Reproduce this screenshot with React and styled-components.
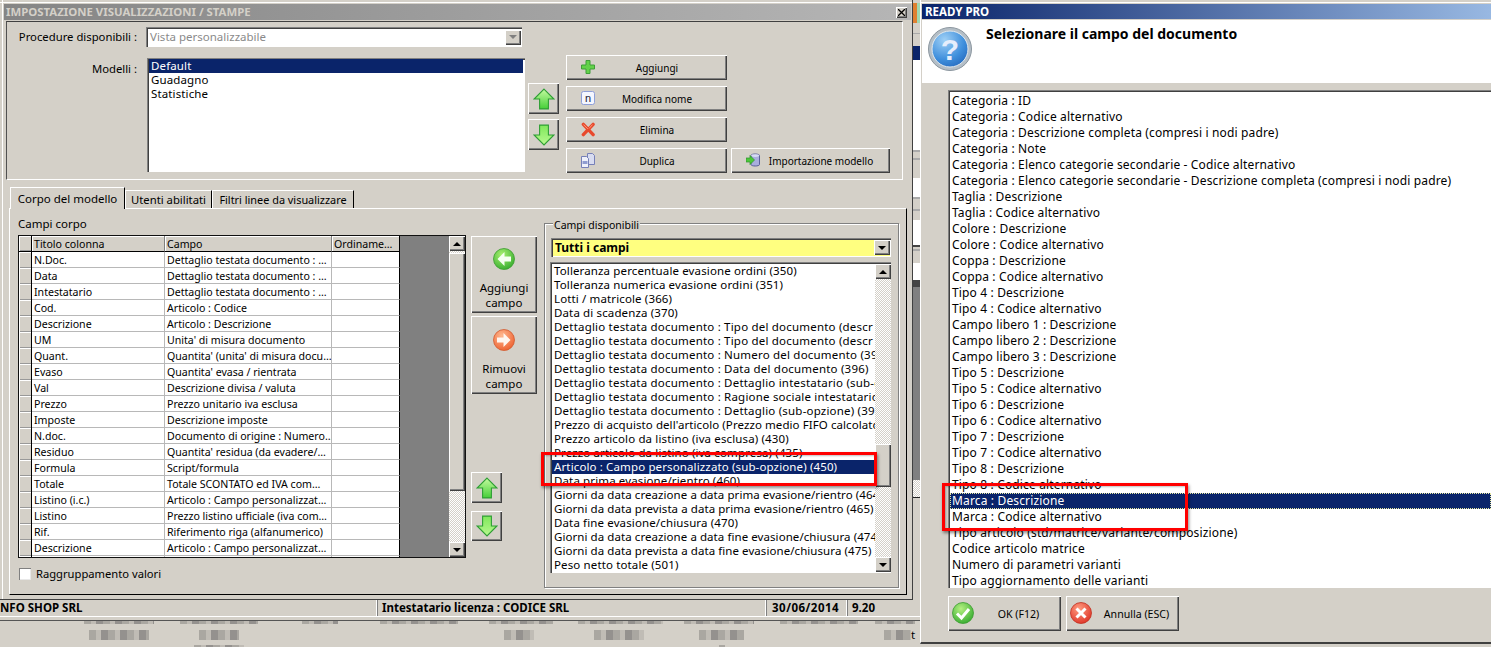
import React from 'react'
import styled, { createGlobalStyle } from 'styled-components'

const GlobalStyle = createGlobalStyle`
  html, body {
    margin: 0;
    padding: 0;
    background: #d4d0c8;
    overflow: hidden;
  }
  * {
    box-sizing: border-box;
  }
`

const FONT = '"Noto Sans", "DejaVu Sans", sans-serif'
const FACE = '#d4d0c8'
const NAVY = '#0a246a'

const raised = `
  background: ${FACE};
  box-shadow: inset 1px 1px #fff, inset -1px -1px #404040, inset -2px -2px #808080;
`
const sunken = `
  box-shadow: inset 1px 1px #808080, inset 2px 2px #404040, inset -1px -1px #fff;
`
const hatch = `
  background: repeating-conic-gradient(#fff 0 25%, ${FACE} 0 50%) 0 0 / 2px 2px;
`

const Screen = styled.div`
  position: relative;
  display: flex;
  width: 1491px;
  height: 647px;
  overflow: hidden;
  background: ${FACE};
  font: 11.5px/14px ${FONT};
  color: #000;
`

const LeftColumn = styled.div`
  display: flex;
  flex-direction: column;
  width: 920px;
  flex: none;
`

const TopRow = styled.div`
  display: flex;
  height: 600px;
`

const MainWindow = styled.div`
  display: flex;
  flex-direction: column;
  width: 913px;
  height: 600px;
  background: linear-gradient(#fff, #fff) 2px 0 / 1px 100% no-repeat, ${FACE};
  border-right: 1px solid #404040;
  border-bottom: 1px solid #404040;
`

const TopEdge = styled.div`
  height: 1px;
  margin: 2px 0 1px;
  background: #fff;
  flex: none;
`

const MainTitle = styled.div`
  display: flex;
  align-items: center;
  justify-content: space-between;
  height: 16px;
  margin: 0 1px 0 4px;
  padding: 0 4px 0 2px;
  background: linear-gradient(90deg, #858585, #b6b6b6);
  color: ${FACE};
  font-weight: 700;
  font-size: 11.4px;
  flex: none;
`

const CloseBox = styled.div`
  display: flex;
  align-items: center;
  justify-content: center;
  width: 11px;
  height: 11px;
  ${raised}
  color: #000;
`

const TopPanel = styled.div`
  display: flex;
  flex-direction: column;
  width: 897px;
  height: 159px;
  margin: 1px 0 0 6px;
  padding-top: 5px;
  border: 1px solid;
  border-color: #404040 #fff #fff #505050;
  flex: none;
`

const FormRow = styled.div`
  display: flex;
  align-items: flex-start;
`

const ModelsRow = styled(FormRow)`
  margin-top: 8px;
`

const FieldLabel = styled.div`
  width: 130px;
  font-size: 11.3px;
  text-align: right;
  line-height: ${(p) => p.$lineHeight || 20}px;
  flex: none;
`

const ComboBox = styled.div`
  display: flex;
  align-items: center;
  justify-content: space-between;
  width: ${(p) => p.$width}px;
  height: ${(p) => p.$height}px;
  margin-left: ${(p) => p.$left || 0}px;
  padding: 2px 1px 2px 4px;
  background: ${(p) => p.$bg || '#fff'};
  color: ${(p) => p.$color || '#000'};
  font-weight: ${(p) => (p.$bold ? 700 : 400)};
  font-size: ${(p) => (p.$bold ? 12 : 11.5)}px;
  ${sunken}
  flex: none;
`

const ScrollButton = styled.div`
  display: flex;
  align-items: center;
  justify-content: center;
  width: 16px;
  height: ${(p) => p.$height || 15}px;
  ${raised}
  flex: none;
`

const Triangle = styled.i`
  display: block;
  width: 0;
  height: 0;
  border-left: 4px solid transparent;
  border-right: 4px solid transparent;
  border-top: ${(p) => (p.$up ? '0' : `4px solid ${p.$color || '#000'}`)};
  border-bottom: ${(p) => (p.$up ? `4px solid ${p.$color || '#000'}` : '0')};
`

const ModelList = styled.div`
  width: 378px;
  height: 114px;
  margin: 3px 0 0 10px;
  padding: 1px 2px;
  background: #fff;
  ${sunken}
  flex: none;
`

const ListRow = styled.div`
  height: ${(p) => p.$height || 14}px;
  line-height: ${(p) => p.$height || 14}px;
  padding-left: 2px;
  letter-spacing: ${(p) => p.$spacing || 0.13}px;
  white-space: nowrap;
  background: ${(p) => (p.$selected ? NAVY : 'transparent')};
  color: ${(p) => (p.$selected ? '#fff' : '#000')};
`

const ArrowColumn = styled.div`
  display: flex;
  flex-direction: column;
  gap: ${(p) => p.$gap}px;
  margin: ${(p) => p.$top}px 0 0 ${(p) => p.$left}px;
  flex: none;
`

const ArrowButton = styled.div`
  display: flex;
  align-items: center;
  justify-content: center;
  width: 31px;
  height: ${(p) => p.$height || 31}px;
  ${raised}
`

const ActionGrid = styled.div`
  display: grid;
  grid-template-columns: 161px 159px;
  grid-template-rows: repeat(4, 25px);
  gap: 6px 4px;
  margin-left: 7px;
`

const ActionButton = styled.div`
  display: flex;
  align-items: center;
  padding-left: 15px;
  grid-column: ${(p) => p.$col || 1};
  grid-row: ${(p) => p.$row};
  font-size: 10px;
  ${raised}

  svg {
    flex: none;
    margin-top: -1px;
  }
`

const ActionText = styled.span`
  flex: 1;
  padding-right: 8px;
  padding-top: 1px;
  text-align: center;
`

const TabRow = styled.div`
  display: flex;
  align-items: flex-end;
  height: 21px;
  margin: 7px 0 0 10px;
  flex: none;
`

const Tab = styled.div`
  position: relative;
  z-index: 1;
  width: ${(p) => p.$width}px;
  height: ${(p) => (p.$active ? 22 : 18)}px;
  margin-bottom: ${(p) => (p.$active ? -1 : 0)}px;
  font-size: ${(p) => p.$size || 11.5}px;
  line-height: ${(p) => (p.$active ? 21 : 18)}px;
  text-align: center;
  background: ${FACE};
  border-top: 1px solid #fff;
  border-left: 1px solid #fff;
  border-right: 1px solid #000;
`

const TabPanel = styled.div`
  display: flex;
  align-items: flex-start;
  width: 898px;
  height: 387px;
  margin-left: 9px;
  padding-left: 8px;
  border: 1px solid;
  border-color: #fff #000 #000 #fff;
  flex: none;
`

const FieldsColumn = styled.div`
  display: flex;
  flex-direction: column;
  width: 448px;
  padding-top: 8px;
  flex: none;
`

const FieldsHeading = styled.div`
  height: 14px;
  margin-bottom: 4px;
`

const DataGrid = styled.div`
  display: flex;
  height: 323px;
  border: 1px solid #111;
`

const GridTable = styled.div`
  display: grid;
  grid-template-columns: 13px 133px 167px 68px;
  grid-auto-rows: 16px;
  width: 381px;
  overflow: hidden;
  background: #fff;
  font-size: 10.6px;
  flex: none;
`

const SelectorCell = styled.div`
  background: ${FACE};
  box-shadow: inset 1px 1px #fff, inset 0 -1px #999;
  border-right: 1px solid #000;
  border-bottom: ${(p) => (p.$header ? '1px solid #000' : '0')};
`

const Cell = styled.div`
  padding: 1px 0 0 2px;
  line-height: 15px;
  white-space: nowrap;
  overflow: hidden;
  border-right: 1px solid ${(p) => (p.$last ? '#000' : '#b8b8b8')};
  border-bottom: 1px solid #b8b8b8;
`

const HeaderCell = styled.div`
  padding: 1px 0 0 2px;
  line-height: 15px;
  white-space: nowrap;
  overflow: hidden;
  background: ${FACE};
  box-shadow: inset 1px 1px #fff;
  border-right: 1px solid ${(p) => (p.$last ? '#000' : '#808080')};
  border-bottom: 1px solid #000;
`

const GridGutter = styled.div`
  width: 49px;
  background: #808080;
  flex: none;
`

const ScrollBar = styled.div`
  display: flex;
  flex-direction: column;
  width: 16px;
  ${hatch}
  flex: none;
`

const ScrollThumb = styled.div`
  width: 16px;
  height: ${(p) => p.$height}px;
  margin-top: ${(p) => p.$top}px;
  ${raised}
  flex: none;
`

const ScrollFill = styled.div`
  flex: 1;
`

const CheckRow = styled.div`
  display: flex;
  align-items: center;
  gap: 5px;
  margin: 9px 0 0 1px;
  font-size: 11.2px;
`

const CheckBox = styled.div`
  width: 12px;
  height: 12px;
  background: #fff;
  box-shadow: inset 1px 1px #808080, inset -1px -1px #e8e8e8;
`

const MoveColumn = styled.div`
  display: flex;
  flex-direction: column;
  width: 66px;
  margin: 27px 0 0 5px;
  flex: none;
`

const BigButton = styled.div`
  display: flex;
  flex-direction: column;
  align-items: center;
  width: 66px;
  height: ${(p) => p.$height}px;
  margin-bottom: 3px;
  padding-top: ${(p) => p.$pad}px;
  font-size: 11.5px;
  line-height: 15px;
  text-align: center;
  ${raised}

  svg {
    margin-bottom: 10px;
    flex: none;
  }
`

const SmallArrows = styled(ArrowColumn)`
  margin: 75px 0 0;
`

const AvailableGroup = styled.div`
  position: relative;
  display: flex;
  flex-direction: column;
  width: 355px;
  height: 365px;
  margin: 14px 0 0 7px;
  padding: 14px 0 0 6px;
  border: 1px solid #808080;
  box-shadow: 1px 1px #fff, inset 1px 1px #fff;
  flex: none;
`

const GroupLegend = styled.span`
  position: absolute;
  top: -6px;
  left: 8px;
  padding: 0 1px;
  font-size: 10.5px;
  background: ${FACE};
`

const AvailableList = styled.div`
  display: flex;
  width: 341px;
  height: 311px;
  margin: 5px 0 0 -1px;
  padding: 2px 0 1px 2px;
  background: #fff;
  ${sunken}
`

const AvailableRows = styled.div`
  flex: 1;
  min-width: 0;
  overflow: hidden;
`

const StatusBar = styled.div`
  display: flex;
  height: 17px;
  font-weight: 700;
  border-bottom: 1px solid #fff;
  flex: none;
`

const StatusCell = styled.div`
  width: ${(p) => p.$width}px;
  padding-left: ${(p) => p.$pad}px;
  line-height: 13px;
  padding-top: 1px;
  letter-spacing: ${(p) => p.$spacing || 0}px;
  white-space: nowrap;
  border-right: ${(p) => (p.$last ? '0' : '1px solid #fff')};
  border-left: ${(p) => (p.$first ? '0' : '1px solid #808080')};
  flex: none;
`

const BehindHeader = styled.div`
  height: 4px;
  border-bottom: 1px solid #555;
  flex: none;
`

const BehindStrip = styled.div`
  display: flex;
  flex-direction: column;
  width: 7px;
  flex: none;
`

const StripPart = styled.div`
  height: ${(p) => p.$h}px;
  background: ${(p) => p.$c};
  flex: none;
`

const StripHatch = styled.div`
  height: ${(p) => p.$h}px;
  ${hatch}
  flex: none;
`

const SmudgeRow = styled.div`
  display: flex;
  height: ${(p) => p.$height}px;
  margin-top: ${(p) => p.$top}px;
  flex: none;
  align-items: center;
  overflow: ${(p) => (p.$clip ? 'hidden' : 'visible')};
`

const Smudge = styled.span`
  display: block;
  width: ${(p) => p.$w}px;
  height: 100%;
  margin-left: ${(p) => p.$gap}px;
  background: repeating-linear-gradient(90deg, #aaa7a1 0 7px, #c0bcb5 7px 12px, #94918e 12px 19px);
  flex: none;
`

const StrayLetter = styled.span`
  margin-left: 0;
  line-height: 10px;
`

const Dialog = styled.div`
  display: flex;
  flex-direction: column;
  width: 571px;
  height: 644px;
  padding-top: 4px;
  background: linear-gradient(#fff, #fff) 0 2px / 100% 1px no-repeat, ${FACE};
  border-left: 1px solid #fff;
  border-bottom: 2px solid #404040;
  flex: none;
`

const DialogTitle = styled.div`
  height: 15px;
  margin-left: 1px;
  padding-left: 3px;
  background: linear-gradient(90deg, ${NAVY}, #98b8e2);
  color: #fff;
  font-weight: 700;
  font-size: 11.5px;
  line-height: 15px;
  flex: none;
`

const DialogHeader = styled.div`
  display: flex;
  align-items: flex-start;
  height: 63px;
  margin: 1px 0 0 1px;
  padding: 7px 0 0 6px;
  background: #fff;
  flex: none;
`

const DialogHeading = styled.h1`
  margin: -1px 0 0 14px;
  font-size: 14px;
  font-weight: 700;
  line-height: 16px;
`

const FieldList = styled.div`
  height: 498px;
  margin: 7px 0 0 27px;
  padding: 3px 0 0 2px;
  overflow: hidden;
  background: #fff;
  box-shadow: inset 1px 1px #808080, inset 2px 2px #404040;
  flex: none;
`

const FieldRow = styled(ListRow)`
  font-size: 12px;
  letter-spacing: 0.15px;
  outline: ${(p) => (p.$selected ? '1px dotted #e8e8a0' : '0')};
  outline-offset: -1px;
`

const DialogFooter = styled.div`
  display: flex;
  gap: 5px;
  margin: 8px 0 0 27px;
`

const FooterButton = styled.div`
  display: flex;
  align-items: center;
  width: 113px;
  height: 35px;
  padding-left: 4px;
  font-size: 10.6px;
  ${raised}

  svg {
    flex: none;
    margin-top: -2px;
  }
`

const FooterText = styled.span`
  flex: 1;
  text-align: center;
  padding-left: 2px;
`

const RedFrame = styled.div`
  position: absolute;
  left: ${(p) => p.$x}px;
  top: ${(p) => p.$y}px;
  width: ${(p) => p.$w}px;
  height: ${(p) => p.$h}px;
  border: 3px solid #f00;
  box-shadow: 1px 2px 3px rgba(0, 0, 0, 0.45), inset 1px 1px 2px rgba(0, 0, 0, 0.25);
`

const Arrow = ({ down, size = 22 }) => (
  <svg width={size} height={size} viewBox="0 0 20 20">
    <defs>
      <linearGradient id={down ? 'arrowDown' : 'arrowUp'} x1="0" y1="0" x2="0" y2="1">
        <stop offset="0" stopColor={down ? '#7fe85a' : '#c4fba0'} />
        <stop offset="1" stopColor={down ? '#b8f890' : '#46cf38'} />
      </linearGradient>
    </defs>
    <polygon
      points={down ? '6,1 14,1 14,10 19,10 10,19 1,10 6,10' : '10,1 19,10 14,10 14,19 6,19 6,10 1,10'}
      fill={`url(#${down ? 'arrowDown' : 'arrowUp'})`}
      stroke="#2f9e35"
      strokeWidth="1"
    />
  </svg>
)

const PlusIcon = () => (
  <svg width="14" height="14" viewBox="0 0 14 14">
    <path d="M5 .5h4v4.5h4.5v4H9v4.5H5V9H.5V5H5z" fill="#63d24a" stroke="#3f9e38" />
  </svg>
)

const RenameIcon = () => (
  <svg width="14" height="14" viewBox="0 0 14 14">
    <rect x=".5" y=".5" width="13" height="13" rx="2" fill="#f4f6ff" stroke="#8f9fd8" />
    <text x="7" y="11" textAnchor="middle" fontFamily="Liberation Sans, sans-serif" fontSize="11" fill="#223">
      n
    </text>
  </svg>
)

const CrossIcon = () => (
  <svg width="14" height="15" viewBox="0 0 15 15">
    <path d="M2.5 2 13 13M13 2 2.5 13" stroke="#e8492c" strokeWidth="3.6" strokeLinecap="round" />
    <path d="M3 2.6 7 6.5M12 2.6 9 6" stroke="#ffa080" strokeWidth="1" strokeLinecap="round" />
  </svg>
)

const CopyIcon = () => (
  <svg width="14" height="15" viewBox="0 0 14 15">
    <path d="M6.5.5h5l2 2v9h-7z" fill="#d8dcf0" stroke="#7680b8" />
    <path d="M.5 3.5h5l2 2v9h-7z" fill="#eef0fa" stroke="#7680b8" />
    <rect x="1.5" y="8" width="5" height="3" fill="#8f9cd0" />
  </svg>
)

const ImportIcon = () => (
  <svg width="14" height="14" viewBox="0 0 14 14">
    <path d="M5 2.5c0-2 8.5-2 8.5 0v9c0 2-8.5 2-8.5 0z" fill="#a9aede" stroke="#5a5f98" />
    <ellipse cx="9.2" cy="2.6" rx="4" ry="1.3" fill="#d8dbf4" />
    <path d="M0 5h4V2.5L8.5 7 4 11.500V9H0z" fill="#4cc83a" stroke="#2f8f2f" strokeWidth=".7" />
  </svg>
)

const CircleIcon = ({ id, from, to, ring, children }) => (
  <svg width="22" height="22" viewBox="0 0 22 22">
    <defs>
      <radialGradient id={id} cx=".4" cy=".3" r=".8">
        <stop offset="0" stopColor={from} />
        <stop offset="1" stopColor={to} />
      </radialGradient>
    </defs>
    <circle cx="11" cy="11" r="10.500" fill={`url(#${id})`} stroke={ring} strokeWidth=".8" />
    {children}
  </svg>
)

const QuestionIcon = () => (
  <svg width="44" height="44" viewBox="0 0 44 44">
    <defs>
      <radialGradient id="qBall" cx=".35" cy=".25" r=".9">
        <stop offset="0" stopColor="#9fd0f6" />
        <stop offset=".6" stopColor="#3f8fdc" />
        <stop offset="1" stopColor="#1f62b8" />
      </radialGradient>
    </defs>
    <circle cx="22" cy="22" r="21.500" fill="#b4bec6" stroke="#8a959e" />
    <circle cx="22" cy="22" r="18" fill="url(#qBall)" stroke="#e4eaee" />
    <text x="22" y="33" textAnchor="middle" fontFamily="Liberation Sans, sans-serif" fontWeight="700" fontSize="30" fill="#e6eefc">
      ?
    </text>
  </svg>
)

const gridRows = [
  ['N.Doc.', 'Dettaglio testata documento : …'],
  ['Data', 'Dettaglio testata documento : …'],
  ['Intestatario', 'Dettaglio testata documento : …'],
  ['Cod.', 'Articolo : Codice'],
  ['Descrizione', 'Articolo : Descrizione'],
  ['UM', "Unita' di misura documento"],
  ['Quant.', "Quantita' (unita' di misura docu…"],
  ['Evaso', "Quantita' evasa / rientrata"],
  ['Val', 'Descrizione divisa / valuta'],
  ['Prezzo', 'Prezzo unitario iva esclusa'],
  ['Imposte', 'Descrizione imposte'],
  ['N.doc.', 'Documento di origine : Numero…'],
  ['Residuo', "Quantita' residua (da evadere/…"],
  ['Formula', 'Script/formula'],
  ['Totale', 'Totale SCONTATO ed IVA com…'],
  ['Listino (i.c.)', 'Articolo : Campo personalizzat…'],
  ['Listino', 'Prezzo listino ufficiale (iva com…'],
  ['Rif.', 'Riferimento riga (alfanumerico)'],
  ['Descrizione', 'Articolo : Campo personalizzat…'],
  ['', ''],
]

const availableFields = [
  'Tolleranza percentuale evasione ordini (350)',
  'Tolleranza numerica evasione ordini (351)',
  'Lotti / matricole (366)',
  'Data di scadenza (370)',
  'Dettaglio testata documento : Tipo del documento (descr',
  'Dettaglio testata documento : Tipo del documento (descr',
  'Dettaglio testata documento : Numero del documento (39',
  'Dettaglio testata documento : Data del documento (396)',
  'Dettaglio testata documento : Dettaglio intestatario (sub-o',
  'Dettaglio testata documento : Ragione sociale intestatario',
  'Dettaglio testata documento : Dettaglio (sub-opzione) (39',
  "Prezzo di acquisto dell'articolo (Prezzo medio FIFO calcolato",
  'Prezzo articolo da listino (iva esclusa) (430)',
  'Prezzo articolo da listino (iva compresa) (435)',
  'Articolo : Campo personalizzato (sub-opzione) (450)',
  'Data prima evasione/rientro (460)',
  'Giorni da data creazione a data prima evasione/rientro (464',
  'Giorni da data prevista a data prima evasione/rientro (465)',
  'Data fine evasione/chiusura (470)',
  'Giorni da data creazione a data fine evasione/chiusura (474',
  'Giorni da data prevista a data fine evasione/chiusura (475)',
  'Peso netto totale (501)',
]

// la spaziatura del font originale varia: questi gruppi di righe vanno regolati a parte
const rowSpacing = (text) => {
  if (text.startsWith('Dettaglio')) return 0.2
  if (text.startsWith('Giorni')) return 0.07
  if (text.startsWith('Prezzo di')) return 0.08
  return 0.13
}

const documentFields = [
  'Categoria : ID',
  'Categoria : Codice alternativo',
  'Categoria : Descrizione completa (compresi i nodi padre)',
  'Categoria : Note',
  'Categoria : Elenco categorie secondarie - Codice alternativo',
  'Categoria : Elenco categorie secondarie - Descrizione completa (compresi i nodi padre)',
  'Taglia : Descrizione',
  'Taglia : Codice alternativo',
  'Colore : Descrizione',
  'Colore : Codice alternativo',
  'Coppa : Descrizione',
  'Coppa : Codice alternativo',
  'Tipo 4 : Descrizione',
  'Tipo 4 : Codice alternativo',
  'Campo libero 1 : Descrizione',
  'Campo libero 2 : Descrizione',
  'Campo libero 3 : Descrizione',
  'Tipo 5 : Descrizione',
  'Tipo 5 : Codice alternativo',
  'Tipo 6 : Descrizione',
  'Tipo 6 : Codice alternativo',
  'Tipo 7 : Descrizione',
  'Tipo 7 : Codice alternativo',
  'Tipo 8 : Descrizione',
  'Tipo 8 : Codice alternativo',
  'Marca : Descrizione',
  'Marca : Codice alternativo',
  'Tipo articolo (std/matrice/variante/composizione)',
  'Codice articolo matrice',
  'Numero di parametri varianti',
  'Tipo aggiornamento delle varianti',
]

const stripParts = [
  [3, FACE],
  [20, 'linear-gradient(90deg, #e08030 55%, #a0d8b0 55%)'],
  [10, FACE],
  [1, '#aaa'],
  [12, FACE],
  [14, NAVY],
  [90, '#fff'],
  [2, '#aaa'],
  [6, FACE],
  [2, '#aaa'],
  [18, FACE],
  [19, '#fff'],
  [2, '#aaa'],
  [10, FACE],
  [2, '#aaa'],
  [9, FACE],
  [25, '#fff'],
  [2, '#444'],
  [2, FACE],
  [2, '#aaa'],
  [12, FACE],
  [17, '#fff'],
  [7, '#444'],
  [193, '#808080'],
]

const App = () => (
  <Screen>
    <GlobalStyle />
    <LeftColumn>
      <TopRow>
        <MainWindow>
          <TopEdge />
          <MainTitle>
            IMPOSTAZIONE VISUALIZZAZIONI / STAMPE
            <CloseBox>
              <svg width="7" height="7" viewBox="0 0 7 7">
                <path d="M0 0 7 7M7 0 0 7" stroke="#000" strokeWidth="1.300" />
              </svg>
            </CloseBox>
          </MainTitle>

          <TopPanel>
            <FormRow>
              <FieldLabel>Procedure disponibili :</FieldLabel>
              <ComboBox $width={376} $height={20} $left={9} $color="#8a8a8a">
                Vista personalizzabile
                <ScrollButton>
                  <Triangle $color="#808080" />
                </ScrollButton>
              </ComboBox>
            </FormRow>
            <ModelsRow>
              <FieldLabel $lineHeight={28}>Modelli :</FieldLabel>
              <ModelList>
                <ListRow $selected>Default</ListRow>
                <ListRow>Guadagno</ListRow>
                <ListRow>Statistiche</ListRow>
              </ModelList>
              <ArrowColumn $gap={5} $top={28} $left={3}>
                <ArrowButton>
                  <Arrow />
                </ArrowButton>
                <ArrowButton>
                  <Arrow down />
                </ArrowButton>
              </ArrowColumn>
              <ActionGrid>
                <ActionButton $row={1}>
                  <PlusIcon />
                  <ActionText>Aggiungi</ActionText>
                </ActionButton>
                <ActionButton $row={2}>
                  <RenameIcon />
                  <ActionText>Modifica nome</ActionText>
                </ActionButton>
                <ActionButton $row={3}>
                  <CrossIcon />
                  <ActionText>Elimina</ActionText>
                </ActionButton>
                <ActionButton $row={4}>
                  <CopyIcon />
                  <ActionText>Duplica</ActionText>
                </ActionButton>
                <ActionButton $row={4} $col={2}>
                  <ImportIcon />
                  <ActionText>Importazione modello</ActionText>
                </ActionButton>
              </ActionGrid>
            </ModelsRow>
          </TopPanel>

          <TabRow>
            <Tab $active $width={115}>Corpo del modello</Tab>
            <Tab $width={87} $size={11.3}>Utenti abilitati</Tab>
            <Tab $width={142} $size={10.9}>Filtri linee da visualizzare</Tab>
          </TabRow>

          <TabPanel>
            <FieldsColumn>
              <FieldsHeading>Campi corpo</FieldsHeading>
              <DataGrid>
                <GridTable>
                  <SelectorCell $header />
                  <HeaderCell>Titolo colonna</HeaderCell>
                  <HeaderCell>Campo</HeaderCell>
                  <HeaderCell $last>Ordiname…</HeaderCell>
                  {gridRows.map(([title, field], i) => (
                    <React.Fragment key={i}>
                      <SelectorCell />
                      <Cell>{title}</Cell>
                      <Cell>{field}</Cell>
                      <Cell $last />
                    </React.Fragment>
                  ))}
                </GridTable>
                <GridGutter />
                <ScrollBar>
                  <ScrollButton>
                    <Triangle $up />
                  </ScrollButton>
                  <ScrollThumb $top={2} $height={238} />
                  <ScrollFill />
                  <ScrollButton>
                    <Triangle />
                  </ScrollButton>
                </ScrollBar>
              </DataGrid>
              <CheckRow>
                <CheckBox />
                Raggruppamento valori
              </CheckRow>
            </FieldsColumn>

            <MoveColumn>
              <BigButton $height={77} $pad={12}>
                <CircleIcon id="addBall" from="#a8f070" to="#2ea82a" ring="#3c9c30">
                  <path d="M11.500 4 4.500 11l7 7v-4.500H18v-5h-6.500z" fill="#f4fff0" />
                </CircleIcon>
                Aggiungi
                <br />
                campo
              </BigButton>
              <BigButton $height={78} $pad={13}>
                <CircleIcon id="removeBall" from="#ffb890" to="#ec5a28" ring="#d05a30">
                  <path d="M10.500 4 17.500 11l-7 7v-4.500H4v-5h6.500z" fill="#fff6f0" />
                </CircleIcon>
                Rimuovi
                <br />
                campo
              </BigButton>
              <SmallArrows $gap={8}>
                <ArrowButton>
                  <Arrow />
                </ArrowButton>
                <ArrowButton $height={30}>
                  <Arrow down />
                </ArrowButton>
              </SmallArrows>
            </MoveColumn>

            <AvailableGroup>
              <GroupLegend>Campi disponibili</GroupLegend>
              <ComboBox $width={340} $height={19} $bg="#ffff80" $bold>
                Tutti i campi
                <ScrollButton>
                  <Triangle />
                </ScrollButton>
              </ComboBox>
              <AvailableList>
                <AvailableRows>
                  {availableFields.map((f, i) => (
                    <ListRow key={i} $selected={i === 14} $spacing={rowSpacing(f)}>
                      {f}
                    </ListRow>
                  ))}
                </AvailableRows>
                <ScrollBar>
                  <ScrollButton>
                    <Triangle $up />
                  </ScrollButton>
                  <ScrollThumb $top={165} $height={43} />
                  <ScrollFill />
                  <ScrollButton>
                    <Triangle />
                  </ScrollButton>
                </ScrollBar>
              </AvailableList>
            </AvailableGroup>
          </TabPanel>
        </MainWindow>

        <BehindStrip>
          {stripParts.map(([h, c], i) => (
            <StripPart key={i} $h={h} $c={c} />
          ))}
          <StripHatch $h={17} />
          <StripPart $h={1} $c="#222" />
          <StripPart $h={99} $c={FACE} />
        </BehindStrip>
      </TopRow>

      <StatusBar>
        <StatusCell $first $width={377} $pad={0}>NFO SHOP SRL</StatusCell>
        <StatusCell $width={389} $pad={4}>Intestatario licenza : CODICE SRL</StatusCell>
        <StatusCell $width={81} $pad={5} $spacing={0.5}>30/06/2014</StatusCell>
        <StatusCell $last $width={73} $pad={4}>9.20</StatusCell>
      </StatusBar>
      <BehindHeader />
      <SmudgeRow $height={3} $top={0} $clip>
        <Smudge $gap={84} $w={70} />
        <Smudge $gap={26} $w={78} />
        <Smudge $gap={44} $w={36} />
        <Smudge $gap={42} $w={78} />
        <Smudge $gap={31} $w={64} />
        <Smudge $gap={25} $w={85} />
        <Smudge $gap={21} $w={70} />
        <Smudge $gap={26} $w={78} />
        <Smudge $gap={17} $w={40} />
      </SmudgeRow>
      <SmudgeRow $height={10} $top={6}>
        <Smudge $gap={89} $w={60} />
        <Smudge $gap={50} $w={40} />
        <Smudge $gap={265} $w={30} />
        <Smudge $gap={60} $w={50} />
        <Smudge $gap={55} $w={45} />
        <Smudge $gap={140} $w={27} />
        <StrayLetter>t</StrayLetter>
      </SmudgeRow>
      <SmudgeRow $height={2} $top={5}>
        <Smudge $gap={194} $w={50} />
        <Smudge $gap={475} $w={6} />
      </SmudgeRow>
    </LeftColumn>

    <Dialog>
      <DialogTitle>READY PRO</DialogTitle>
      <DialogHeader>
        <QuestionIcon />
        <DialogHeading>Selezionare il campo del documento</DialogHeading>
      </DialogHeader>
      <FieldList>
        {documentFields.map((f, i) => (
          <FieldRow key={i} $height={16} $selected={i === 25}>
            {f}
          </FieldRow>
        ))}
      </FieldList>
      <DialogFooter>
        <FooterButton>
          <CircleIcon id="okBall" from="#b4f080" to="#2ca62a" ring="#3c9c30">
            <path d="m5 11.500 4.500 4.500 7.500-9" fill="none" stroke="#fff" strokeWidth="3" />
          </CircleIcon>
          <FooterText>OK (F12)</FooterText>
        </FooterButton>
        <FooterButton>
          <CircleIcon id="cancelBall" from="#ff9c80" to="#dc2c20" ring="#c03020">
            <path d="m6.500 6.500 9 9M15.500 6.500l-9 9" fill="none" stroke="#fff" strokeWidth="3" />
          </CircleIcon>
          <FooterText>Annulla (ESC)</FooterText>
        </FooterButton>
      </DialogFooter>
    </Dialog>

    <RedFrame $x={541} $y={452} $w={336} $h={34} />
    <RedFrame $x={942} $y={483} $w={246} $h={48} />
  </Screen>
)

export default App
